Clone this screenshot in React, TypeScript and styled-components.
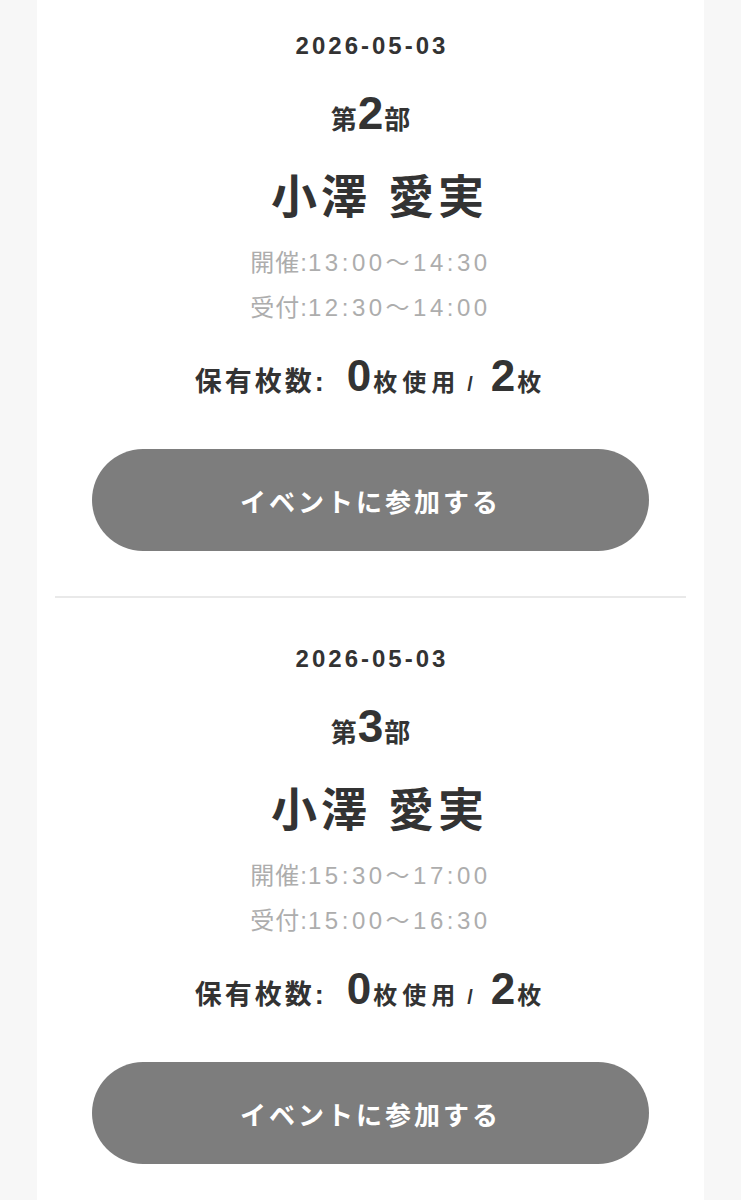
import * as React from 'react'
import styled, { createGlobalStyle } from 'styled-components'

const GlobalStyle = createGlobalStyle`
	html, body {
		margin: 0;
		padding: 0;
		background: #f7f7f7;
	}
	body {
		font-family: 'Liberation Sans', 'Noto Sans CJK JP', sans-serif;
		color: #333333;
	}
`

const Card = styled.main`
	width: 667px;
	margin: -15px auto 0;
	padding: 0 18px;
	box-sizing: border-box;
	background: #ffffff;
	min-height: 1240px;
`

const Session = styled.section`
	display: flex;
	flex-direction: column;
	align-items: center;
	padding: 49px 0 45px;
	border-bottom: 2px solid #e9e9e9;
`

const DateText = styled.div`
	font-size: 24px;
	line-height: 1;
	font-weight: 700;
	letter-spacing: 3px;
	margin-right: -3px;
`

const PartRow = styled.div`
	display: flex;
	align-items: baseline;
	justify-content: center;
	margin-top: 32px;
	font-weight: 700;
	line-height: 1;
`

const PartLabel = styled.span`
	font-size: 26px;
`

const PartNumber = styled.span`
	font-size: 46px;
	margin: 0 1px;
`

const Name = styled.h2`
	margin: 38px 0 0;
	padding-left: 14px;
	font-size: 46px;
	line-height: 1;
	font-weight: 700;
	letter-spacing: 4px;
	margin-right: -4px;
`

const TimeLine = styled.div<{ $gap: number }>`
	margin-top: ${(p) => p.$gap}px;
	font-size: 24px;
	line-height: 1;
	color: #adadad;
	span:first-child {
		letter-spacing: 1px;
	}
	span:last-child {
		letter-spacing: 3.5px;
	}
`

const Holdings = styled.div`
	display: flex;
	align-items: baseline;
	justify-content: center;
	margin-top: 34px;
	font-weight: 700;
	line-height: 1;
`

const HoldLabel = styled.span`
	font-size: 27px;
	letter-spacing: 3px;
	margin-right: 20px;
`

const Count = styled.span`
	font-size: 44px;
	margin-right: 2px;
`

const Unit = styled.span`
	font-size: 24px;
	letter-spacing: 5px;
`

const Slash = styled.span`
	font-size: 20px;
	margin: 0 18px 0 7px;
`

const JoinButton = styled.button`
	margin-top: 51px;
	width: 557px;
	height: 102px;
	border: none;
	border-radius: 51px;
	background: #7d7d7d;
	color: #ffffff;
	font-family: inherit;
	font-size: 26px;
	font-weight: 700;
	letter-spacing: 3px;
	cursor: pointer;
`

type Event = {
	date: string
	part: number
	name: string
	open: string
	reception: string
	used: number
	total: number
}

const events: Event[] = [
	{
		date: '2026-05-03',
		part: 2,
		name: '小澤 愛実',
		open: '13:00〜14:30',
		reception: '12:30〜14:00',
		used: 0,
		total: 2,
	},
	{
		date: '2026-05-03',
		part: 3,
		name: '小澤 愛実',
		open: '15:30〜17:00',
		reception: '15:00〜16:30',
		used: 0,
		total: 2,
	},
]

const EventBlock = ({ ev }: { ev: Event }) => (
	<Session>
		<DateText>{ev.date}</DateText>
		<PartRow>
			<PartLabel>第</PartLabel>
			<PartNumber>{ev.part}</PartNumber>
			<PartLabel>部</PartLabel>
		</PartRow>
		<Name>{ev.name}</Name>
		<TimeLine $gap={31}>
			<span>開催:</span>
			<span>{ev.open}</span>
		</TimeLine>
		<TimeLine $gap={21}>
			<span>受付:</span>
			<span>{ev.reception}</span>
		</TimeLine>
		<Holdings>
			<HoldLabel>保有枚数:</HoldLabel>
			<Count>{ev.used}</Count>
			<Unit>枚使用</Unit>
			<Slash>/</Slash>
			<Count>{ev.total}</Count>
			<Unit>枚</Unit>
		</Holdings>
		<JoinButton>イベントに参加する</JoinButton>
	</Session>
)

export default function App() {
	return (
		<>
			<GlobalStyle />
			<Card>
				{events.map((ev) => (
					<EventBlock key={ev.part} ev={ev} />
				))}
			</Card>
		</>
	)
}
